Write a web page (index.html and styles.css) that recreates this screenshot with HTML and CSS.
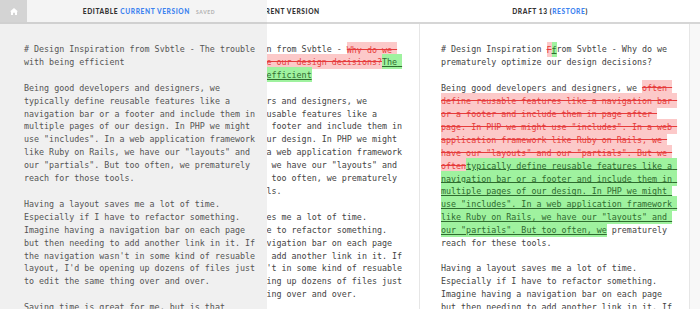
FILE: index.html
```html
<!DOCTYPE html>
<html lang="en">
<head>
  <meta charset="utf-8">
  <title>Draftin - Compare versions</title>
  <link rel="stylesheet" href="styles.css">
</head>
<body>
  <header class="topbar">
    <div class="spacer"></div>
    <div class="col-head">Current Version</div>
    <div class="col-head draft-head">Draft 13 (<a href="#">Restore</a>)</div>
  </header>

  <main class="columns">
    <div class="spacer"></div>
    <section class="col">
<pre class="doc"># Design Inspiration from Svbtle - <del>Why do we prematurely optimize our design decisions?</del><ins>The trouble with being efficient</ins>

Being good developers and designers, we typically define reusable features like a navigation bar or a footer and include them in multiple pages of our design. In PHP we might use "includes". In a web application framework like Ruby on Rails, we have our "layouts" and our "partials". But too often, we prematurely reach for those tools.

Having a layout saves me a lot of time. Especially if I have to refactor something. Imagine having a navigation bar on each page but then needing to add another link in it. If the navigation wasn't in some kind of resuable layout, I'd be opening up dozens of files just to edit the same thing over and over.</pre>
    </section>
    <section class="col">
<pre class="doc"># Design Inspiration <del>F</del><ins>f</ins>rom Svbtle - Why do we prematurely optimize our design decisions?

Being good developers and designers, we <del>often define reusable features like a navigation bar or a footer and include them in page after page. In PHP we might use "includes". In a web application framework like Ruby on Rails, we have our "layouts" and our "partials". But we often</del><ins>typically define reusable features like a navigation bar or a footer and include them in multiple pages of our design. In PHP we might use "includes". In a web application framework like Ruby on Rails, we have our "layouts" and our "partials". But too often, we</ins> prematurely reach for these tools.

Having a layout saves me a lot of time. Especially if I have to refactor something. Imagine having a navigation bar on each page but then needing to add another link in it. If the navigation wasn't in some kind of resuable layout, I'd be opening up dozens of files just to edit the same thing over and over.</pre>
    </section>
  </main>

  <aside class="editor">
    <div class="editor-head">
      <a class="home" href="#">
        <svg width="8" height="7" viewBox="0 0 8 7"><path d="M4 0 L8 3.6 L7 3.6 L7 7 L5 7 L5 4.8 L3 4.8 L3 7 L1 7 L1 3.6 L0 3.6 Z" fill="#fff"/></svg>
      </a>
      <div class="editor-title">Editable <span class="blue">Current Version</span> <span class="saved">Saved</span></div>
    </div>
<pre class="doc editable"># Design Inspiration from Svbtle - The trouble with being efficient

Being good developers and designers, we typically define reusable features like a navigation bar or a footer and include them in multiple pages of our design. In PHP we might use "includes". In a web application framework like Ruby on Rails, we have our "layouts" and our "partials". But too often, we prematurely reach for those tools.

Having a layout saves me a lot of time. Especially if I have to refactor something. Imagine having a navigation bar on each page but then needing to add another link in it. If the navigation wasn't in some kind of resuable layout, I'd be opening up dozens of files just to edit the same thing over and over.

Saving time is great for me, but is that really the best for my readers?</pre>
  </aside>
</body>
</html>
```

FILE: styles.css
```css
html, body {
  margin: 0;
  height: 100%;
}

body {
  background-color: #f8f8f8;
  overflow: hidden;
  position: relative;
}

.topbar {
  display: flex;
  height: 22px;
  background-color: #fff;
  border-bottom: 2px solid #d6d6d6;
}

.spacer {
  width: 150px;
  flex: none;
}

.col-head,
.editor-title {
  font-family: Lato, "Open Sans", sans-serif;
  font-weight: 900;
  font-size: 6.6px;
  letter-spacing: 0.6px;
  text-transform: uppercase;
  color: #333;
  line-height: 22px;
  text-align: center;
}

.col-head {
  width: 270px;
  flex: none;
}

.draft-head {
  padding-right: 10px;
  box-sizing: border-box;
}

.col-head a {
  color: #3d83f0;
  text-decoration: none;
}

.columns {
  display: flex;
  height: 100%;
}

.col {
  width: 270px;
  flex: none;
  box-sizing: border-box;
  background-color: #fff;
  border-right: 1px solid #e6e6e6;
  padding: 19px 14px 0 21px;
}

.doc {
  margin: 0;
  font-family: "DejaVu Sans Mono", "Liberation Mono", monospace;
  font-size: 8.35px;
  line-height: 12.9px;
  color: #444;
  white-space: pre-wrap;
  width: 234px;
}

del {
  color: #e63b3b;
  background-color: #fcc9c9;
  padding: 2.5px 0;
}

ins {
  color: #2f6b2f;
  background-color: #9ff29f;
  padding: 2.5px 0;
}

.editor {
  position: absolute;
  left: 0;
  top: 0;
  bottom: 0;
  width: 267px;
  background-color: #f0f0f0;
}

.editor-head {
  display: flex;
  height: 22px;
  background-color: #f4f4f4;
  border-bottom: 2px solid #d0d0d0;
}

.home {
  width: 27px;
  flex: none;
  background-color: #d4d4d4;
  display: flex;
  align-items: center;
  justify-content: center;
}

.editor-title {
  flex: 1;
  padding-left: 4px;
}

.blue {
  color: #3d83f0;
}

.saved {
  font-size: 5px;
  color: #b5b5b5;
  margin-left: 4px;
}

.editable {
  color: #555;
  padding: 19px 0 0 24px;
}
```
